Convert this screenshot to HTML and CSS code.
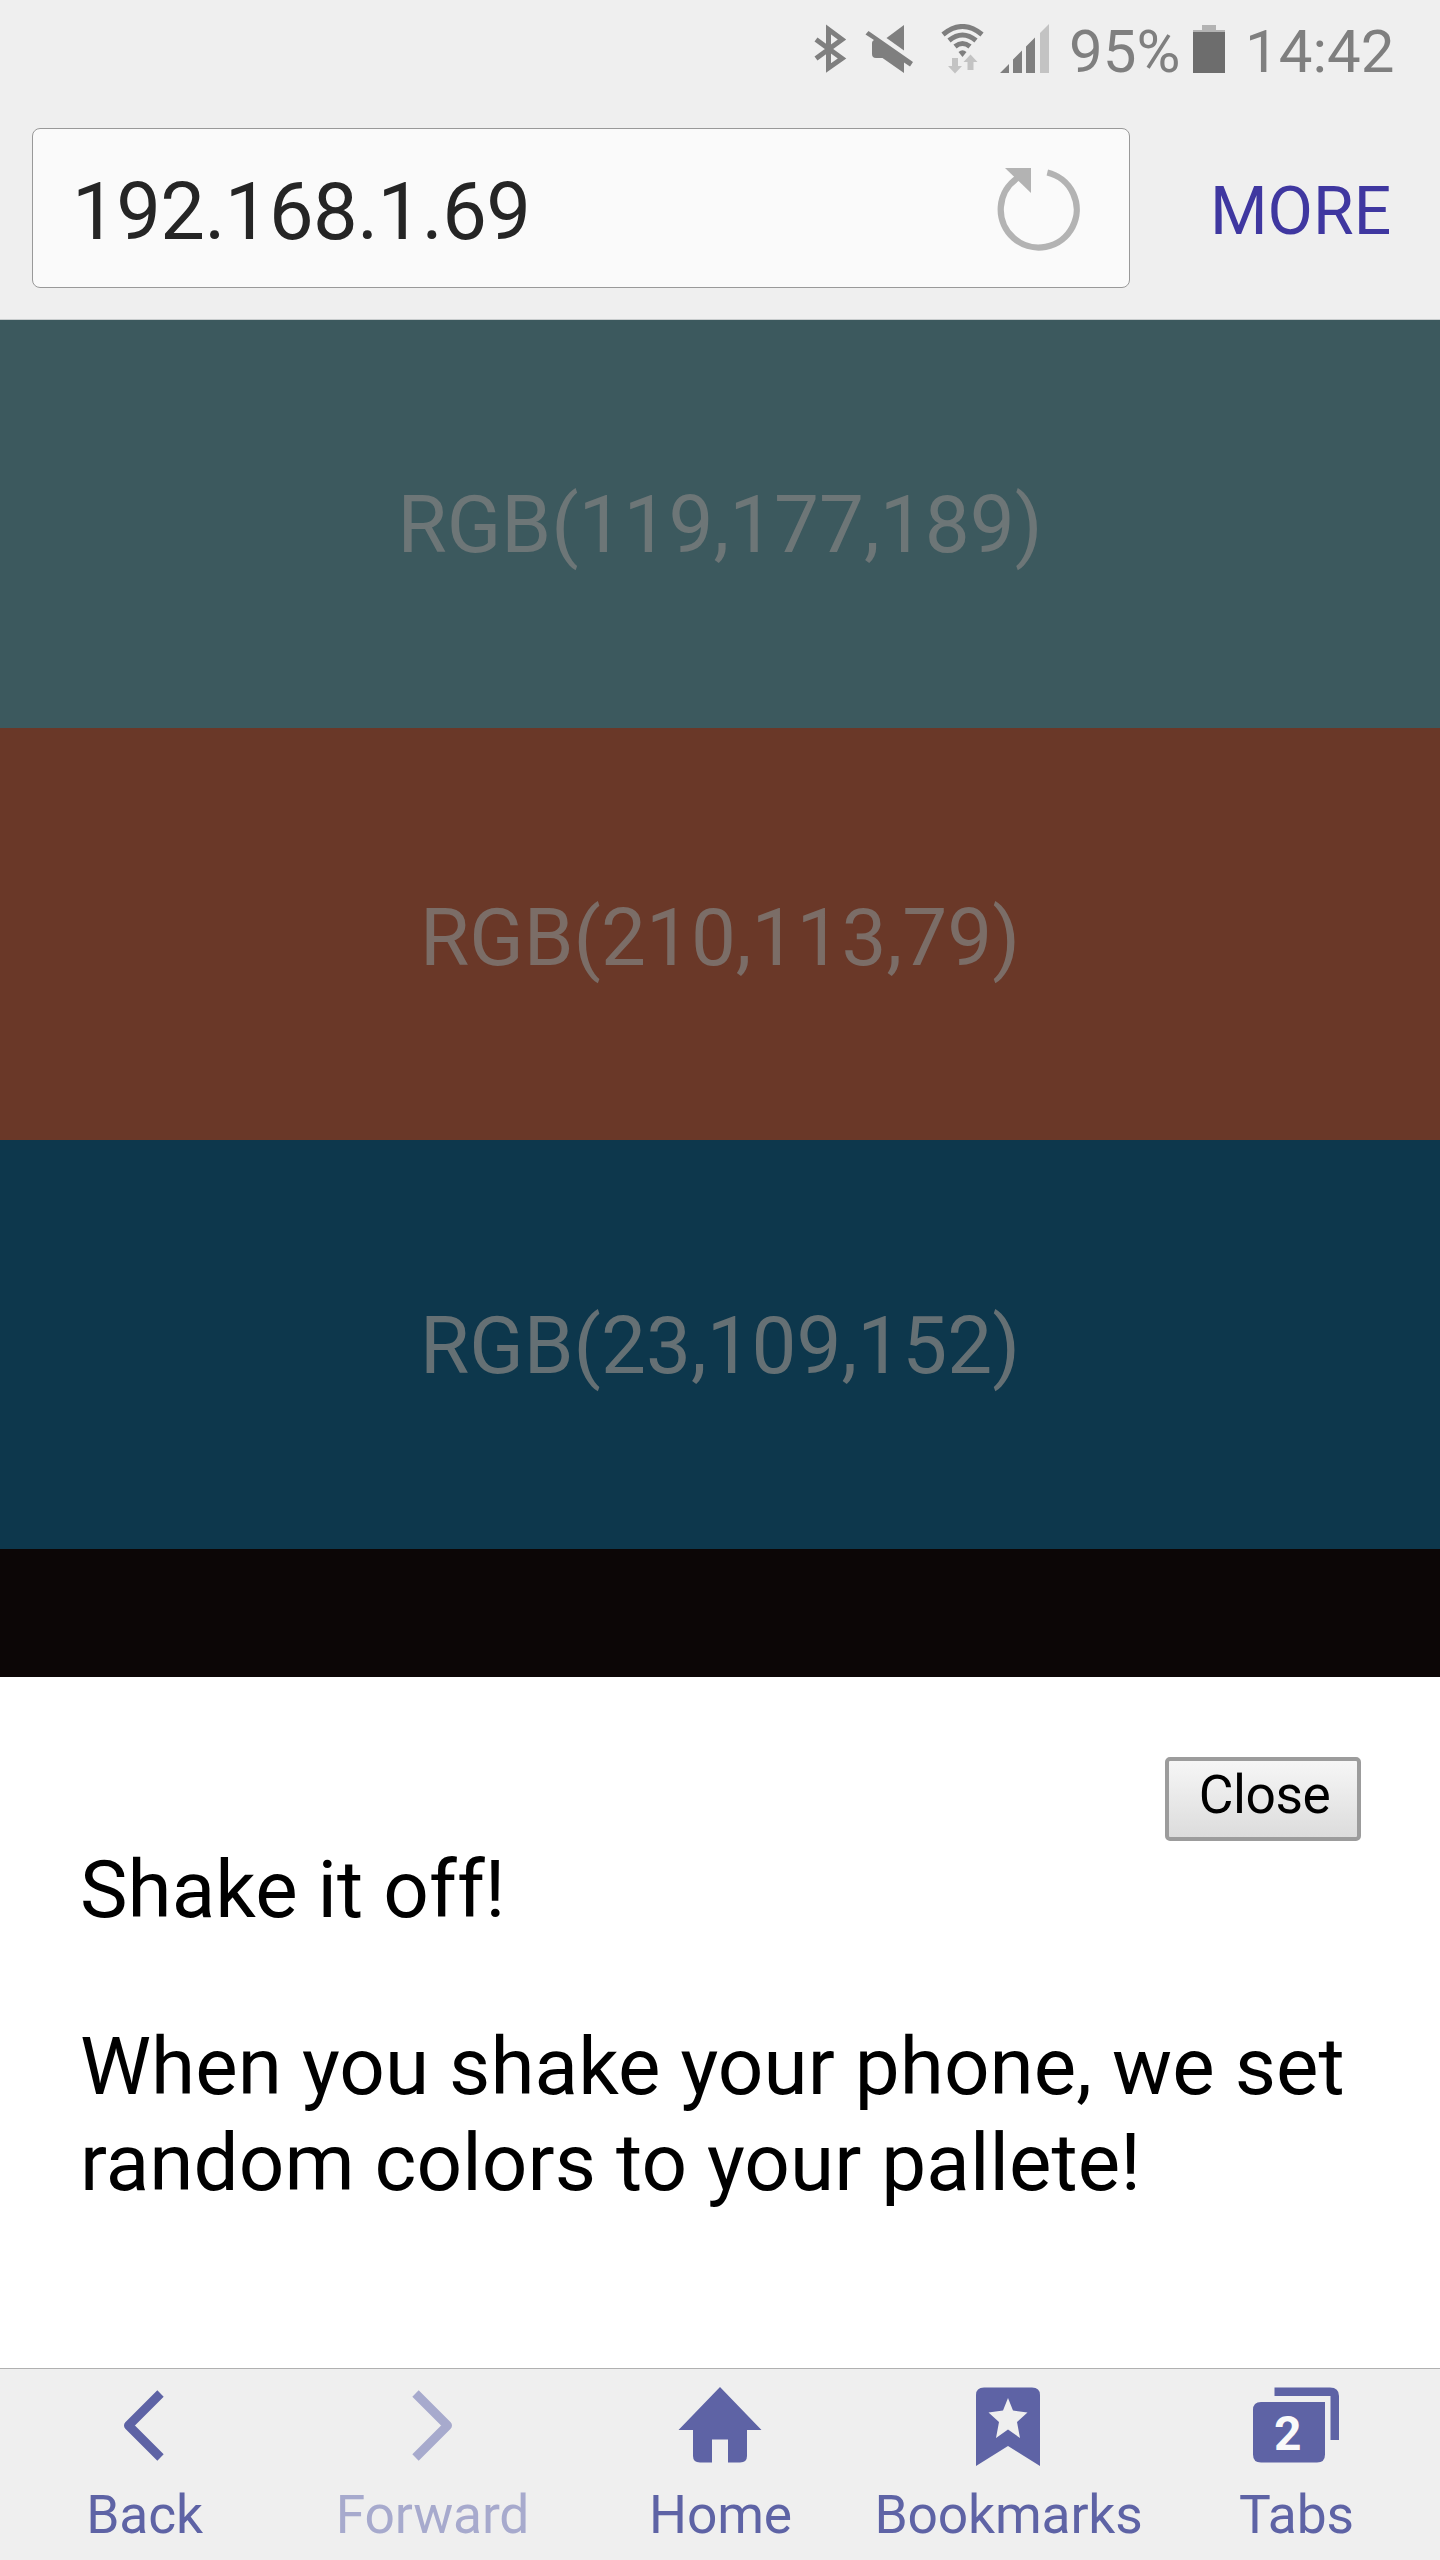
FILE: index.html
```html
<!DOCTYPE html>
<html lang="en">
<head>
<meta charset="utf-8">
<title>Palette</title>
<link rel="stylesheet" href="styles.css">
</head>
<body>
<div class="screen">
  <header class="chrome">
    <div class="status">
      <svg class="status-icons" width="270" height="50" viewBox="810 24 270 50">
        <g fill="none" stroke="#7f7f7f" stroke-width="5">
          <path d="M816 39.5 842 58.5 828.500 68V29.500L842 39.500 816 58.500"/>
        </g>
        <g fill="#7f7f7f">
          <path d="M904 25V50.500L886.500 38Z"/>
          <path d="M868.500 31 913 62 910 66.500 904 62.500V73L882.500 58H876Q872 58 872 54V43Q872 41 874 40L865.500 34.500Z"/>
        </g>
        <g fill="none" stroke="#7f7f7f" stroke-width="5">
          <path d="M943 34.500Q962.500 18.500 982 34.500"/>
          <path d="M949 40.500Q962.500 29.500 976 40.500"/>
          <path d="M955 46.500Q962.500 40.500 970 46.500"/>
        </g>
        <path fill="#7f7f7f" d="M958.500 52Q962.500 48.500 966.500 52L962.500 57Z"/>
        <path fill="#c3c3c3" d="M952 58h6v8h4l-7 7.500-7-7.500h4ZM967.500 70h6v-8h4l-7-7.500-7 7.500h4Z"/>
        <path fill="#7f7f7f" d="M1000 73 1009 64V73ZM1013 73V59.500L1022 50.500V73ZM1026 73V46.500L1035 37.500V73Z"/>
        <path fill="#c3c3c3" d="M1040 73V33L1049 24V73Z"/>
      </svg>
      <span class="battery-level">95%</span>
      <svg class="battery" width="32" height="48" viewBox="0 0 32 48">
        <path fill="#b3b3b3" d="M9 0H23V5H32V7.500H0V5H9Z"/>
        <path fill="#6d6d6d" d="M0 7H32V48H0Z"/>
      </svg>
      <span class="clock">14:42</span>
    </div>
    <div class="toolbar">
      <div class="address">
        <span class="url">192.168.1.69</span>
        <svg class="reload" width="84" height="84" viewBox="0 0 84 84">
          <path fill="none" stroke="#b3b3b3" stroke-width="6.300" d="M50.300 5.500A38 38 0 1 1 20.500 11"/>
          <path fill="#b3b3b3" d="M8 1H34V26Z"/>
        </svg>
      </div>
      <a class="more">MORE</a>
    </div>
  </header>
  <main class="palette">
    <div class="swatch teal"><span>RGB(119,177,189)</span></div>
    <div class="swatch rust"><span>RGB(210,113,79)</span></div>
    <div class="swatch navy"><span>RGB(23,109,152)</span></div>
    <div class="swatch black"></div>
  </main>
  <section class="sheet">
    <button class="close">Close</button>
    <p class="title">Shake it off!</p>
    <p class="message">When you shake your phone, we set<br>random colors to your pallete!</p>
  </section>
  <nav class="nav">
    <a class="item">
      <svg width="96" height="80" viewBox="0 0 96 80"><path fill="none" stroke="#5e63a5" stroke-width="9" stroke-linejoin="round" d="M64.500 6.500 32.500 38.500 64.500 70.500"/></svg>
      <span>Back</span>
    </a>
    <a class="item disabled">
      <svg width="96" height="80" viewBox="0 0 96 80"><path fill="none" stroke="#a7aacd" stroke-width="9" stroke-linejoin="round" d="M31.500 6.500 63.500 38.500 31.500 70.500"/></svg>
      <span>Forward</span>
    </a>
    <a class="item">
      <svg width="96" height="80" viewBox="0 0 96 80"><path fill="#5e63a5" d="M48 0 89.500 43H75V69Q75 75.500 68 75.500H56V52.500H40V75.500H28Q21 75.500 21 69V43H6.500Z"/></svg>
      <span>Home</span>
    </a>
    <a class="item">
      <svg width="96" height="80" viewBox="0 0 96 80"><path fill="#5e63a5" fill-rule="evenodd" d="M24 .500H72Q80 .500 80 8V79L48 59 16 79V8Q16 .500 24 .500ZM48 11 43 23.500 28.500 25.500 39 35 36 51 48 42.500 60 51 57 35 67.500 25.500 53 23.500Z"/></svg>
      <span>Bookmarks</span>
    </a>
    <a class="item">
      <svg width="96" height="80" viewBox="0 0 96 80"><path fill="#5e63a5" d="M13 15H77V67.500Q77 75.500 69 75.500H13Q5 75.500 5 67.500V23Q5 15 13 15ZM26.500 .500H82Q91 .500 91 9V53H82.500V9H26.500Z"/><text class="count" x="26" y="63">2</text></svg>
      <span>Tabs</span>
    </a>
  </nav>
</div>
</body>
</html>
```
FILE: styles.css
```css
* { box-sizing: border-box; }

body {
  margin: 0;
  background: #fff;
  font-family: Roboto, "Liberation Sans", sans-serif;
}

.screen {
  display: flex;
  flex-direction: column;
  width: 1440px;
  height: 2560px;
  overflow: hidden;
}

.chrome {
  flex: none;
  height: 320px;
  background: #efefef;
  border-bottom: 1px solid #c8cccd;
}

.status {
  display: flex;
  align-items: flex-start;
  height: 128px;
  padding: 24px 0 0 810px;
  color: #7f7f7f;
  font-size: 60px;
  line-height: 56px;
}

.status-icons { flex: none; margin-right: -11px; }
.battery-level { width: 124px; }
.battery { flex: none; margin-top: 1px; }
.battery-level, .clock { white-space: nowrap; }
.clock { margin-left: 20px; }

.toolbar {
  display: flex;
  align-items: center;
  gap: 80px;
  padding-left: 32px;
}

.address {
  display: flex;
  align-items: center;
  justify-content: space-between;
  width: 1098px;
  height: 160px;
  padding: 0 48px 0 39px;
  background: #fafafa;
  border: 1px solid #999;
  border-radius: 8px;
}

.url { color: #252525; font-size: 79.5px; line-height: 94px; padding-top: 8px; letter-spacing: -0.55px; }
.reload { flex: none; margin-top: 1px; }
.more { color: #3f37a0; font-size: 66px; line-height: 80px; padding-top: 8px; }

.palette { flex: none; height: 1357px; }

.swatch {
  display: flex;
  align-items: center;
  justify-content: center;
  height: 408px;
  padding-top: 2px;
  color: #6d7677;
  font-size: 80px;
}

.teal { background: #3c595e; }
.rust { height: 412px; padding-top: 7px; background: #6a3828; color: #7b6d67; }
.navy { height: 409px; background: #0d374c; color: #657074; }
.black { height: 128px; background: #0c0606; }

.sheet {
  flex: none;
  display: flex;
  flex-direction: column;
  height: 691px;
  padding: 80px 79px 0 80px;
  color: #000;
  font-size: 80px;
  line-height: 96px;
  letter-spacing: 0.08px;
}

.close {
  align-self: flex-end;
  width: 196px;
  height: 84px;
  padding: 0 0 8px 3px;
  border: 4px solid #9c9c9c;
  border-radius: 5px;
  background: linear-gradient(#f6f6f6, #dcdcdc);
  color: #000;
  font: 53.333px/60px Roboto, "Liberation Sans", sans-serif;
  letter-spacing: -0.5px;
}

.title, .message { margin: 0; white-space: nowrap; }
.title { margin-top: 1px; }
.message { margin-top: 81px; }

.nav {
  flex: none;
  display: grid;
  grid-template-columns: repeat(5, 1fr);
  height: 192px;
  background: #efefef;
  border-top: 1px solid #b0b0b0;
}

.item {
  display: flex;
  flex-direction: column;
  align-items: center;
  padding-top: 18px;
  color: #5e63a5;
  font-size: 53.333px;
  line-height: 64px;
}

.item span { margin-top: 16px; padding-left: 1px; letter-spacing: -0.15px; }
.disabled { color: #a7aacd; }
.count { fill: #fafafa; font-size: 48px; font-weight: 700; }
```
